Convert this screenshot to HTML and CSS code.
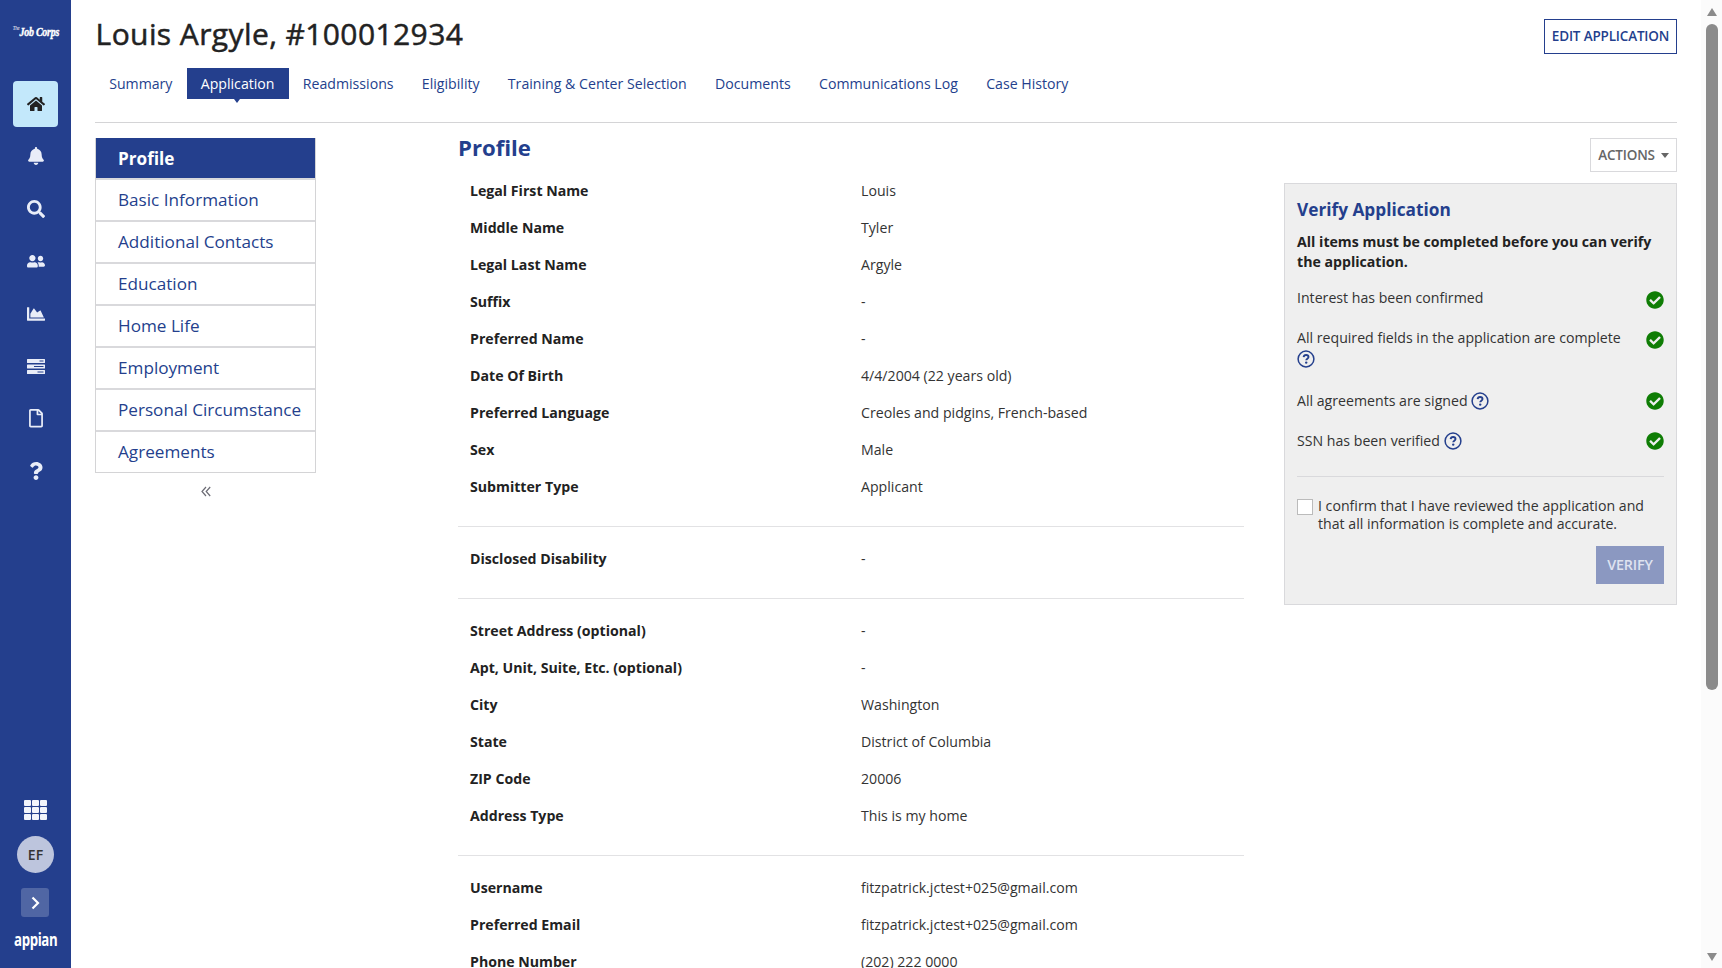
FILE: index.html
```html
<!DOCTYPE html>
<html lang="en">
<head>
<meta charset="utf-8">
<title>Louis Argyle, #100012934</title>
<link rel="stylesheet" href="styles.css">
</head>
<body>
<svg class="defs" width="0" height="0">
  <symbol id="help" viewBox="0 0 18 18"><circle cx="9" cy="9" r="7.9" fill="none" stroke="currentColor" stroke-width="1.5"/><path d="M6.6 7.1C6.8 5.7 7.8 5 9.1 5c1.400 0 2.400.8 2.400 2 0 1.700-2.300 1.700-2.300 3.300" fill="none" stroke="currentColor" stroke-width="1.900"/><circle cx="9.200" cy="12.600" r="1.200" fill="currentColor"/></symbol>
  <symbol id="check" viewBox="0 0 512 512"><path d="M504 256c0 136.967-111.033 248-248 248S8 392.967 8 256 119.033 8 256 8s248 111.033 248 248zM227.314 387.314l184-184c6.248-6.248 6.248-16.379 0-22.627l-22.627-22.627c-6.248-6.249-16.379-6.249-22.628 0L216 308.118l-70.059-70.059c-6.248-6.248-16.379-6.248-22.628 0l-22.627 22.627c-6.248 6.248-6.248 16.379 0 22.627l104 104c6.249 6.249 16.379 6.249 22.628.001z" fill="currentColor"/></symbol>
</svg>
<div class="app">
  <aside class="rail">
    <div class="logo"><span class="logo-the">The</span>Job Corps</div>
    <nav class="rail-nav">
      <a class="rail-item active"><svg width="18" height="16" viewBox="0 0 576 512"><path d="M280.37 148.26L96 300.11V464a16 16 0 0 0 16 16l112.06-.29a16 16 0 0 0 15.92-16V368a16 16 0 0 1 16-16h64a16 16 0 0 1 16 16v95.64a16 16 0 0 0 16 16.05L464 480a16 16 0 0 0 16-16V300L295.67 148.26a12.19 12.19 0 0 0-15.3 0zM571.6 251.47L488 182.56V44.05a12 12 0 0 0-12-12h-56a12 12 0 0 0-12 12v72.61L318.47 43a48 48 0 0 0-61 0L4.34 251.47a12 12 0 0 0-1.6 16.9l25.5 31A12 12 0 0 0 45.15 301l235.22-193.74a12.19 12.19 0 0 1 15.3 0L530.9 301a12 12 0 0 0 16.9-1.6l25.5-31a12 12 0 0 0-1.7-16.93z"/></svg></a>
      <a class="rail-item"><svg width="16" height="18" viewBox="0 0 448 512"><path d="M224 512c35.32 0 63.97-28.65 63.97-64H160.03c0 35.35 28.65 64 63.97 64zm215.39-149.71c-19.32-20.76-55.47-51.99-55.47-154.29 0-77.7-54.48-139.9-127.94-155.16V32c0-17.67-14.32-32-31.98-32s-31.98 14.33-31.98 32v20.84C118.56 68.1 64.08 130.3 64.08 208c0 102.3-36.15 133.53-55.47 154.29-6 6.45-8.66 14.16-8.61 21.71.11 16.4 12.98 32 32.1 32h383.8c19.12 0 32-15.6 32.1-32 .05-7.55-2.61-15.27-8.61-21.71z"/></svg></a>
      <a class="rail-item"><svg width="18" height="18" viewBox="0 0 512 512"><path d="M505 442.7L405.3 343c-4.5-4.5-10.6-7-17-7H372c27.6-35.3 44-79.7 44-128C416 93.1 322.9 0 208 0S0 93.1 0 208s93.1 208 208 208c48.3 0 92.7-16.4 128-44v16.3c0 6.4 2.5 12.5 7 17l99.7 99.7c9.4 9.4 24.6 9.4 33.9 0l28.3-28.3c9.4-9.4 9.4-24.6.1-34zM208 336c-70.7 0-128-57.2-128-128 0-70.7 57.2-128 128-128 70.7 0 128 57.2 128 128 0 70.7-57.2 128-128 128z"/></svg></a>
      <a class="rail-item"><svg width="18" height="14.500" viewBox="0 0 640 512"><path d="M192 256c61.9 0 112-50.1 112-112S253.9 32 192 32 80 82.1 80 144s50.1 112 112 112zm76.8 32h-8.3c-20.8 10-43.9 16-68.5 16s-47.6-6-68.5-16h-8.3C51.6 288 0 339.6 0 403.2V432c0 26.5 21.5 48 48 48h288c26.5 0 48-21.5 48-48v-28.8c0-63.6-51.6-115.2-115.2-115.2zM480 256c53 0 96-43 96-96s-43-96-96-96-96 43-96 96 43 96 96 96zm48 32h-3.8c-13.9 4.8-28.6 8-44.2 8s-30.3-3.2-44.2-8H432c-20.4 0-39.2 5.9-55.7 15.4 24.4 26.3 39.7 61.2 39.7 99.8v38.4c0 2.2-.5 4.3-.6 6.4H592c26.5 0 48-21.5 48-48 0-61.9-50.1-112-112-112z"/></svg></a>
      <a class="rail-item"><svg width="18" height="18" viewBox="0 0 512 512"><path d="M500 384c6.6 0 12 5.4 12 12v40c0 6.6-5.4 12-12 12H12c-6.6 0-12-5.4-12-12V76c0-6.6 5.4-12 12-12h40c6.6 0 12 5.4 12 12v308h436zM372.7 159.5L288 216l-85.3-113.7c-5.1-6.8-15.5-6.3-19.9 1L96 248v104h384l-89.9-187.8c-3.2-6.5-11.4-8.7-17.4-4.7z"/></svg></a>
      <a class="rail-item"><svg width="18" height="15" viewBox="0 0 18 15"><path fill-rule="evenodd" d="M.5 0h17q.5 0 .5.500v3q0 .5-.5.500H.5Q0 4 0 3.500v-3Q0 0 .5 0zM12.500 1.400v1.200h4V1.400zM.5 5.500h17q.5 0 .5.500v3q0 .5-.5.500H.5Q0 9.500 0 9V6q0-.5.500-.5zM7 6.900v1.200h9.500V6.900zM.5 11h17q.5 0 .5.500v3q0 .5-.5.500H.5q-.5 0-.5-.5v-3q0-.5.500-.5zM10.500 12.400v1.200h6v-1.200z"/></svg></a>
      <a class="rail-item"><svg width="14" height="18.500" viewBox="0 0 384 512"><path d="M369.9 97.9L286 14C277 5 264.8-.1 252.1-.1H48C21.5 0 0 21.5 0 48v416c0 26.5 21.5 48 48 48h288c26.5 0 48-21.5 48-48V131.9c0-12.7-5.1-25-14.1-34zM332.1 128H256V51.9l76.1 76.1zM48 464V48h160v104c0 13.3 10.7 24 24 24h104v288H48z"/></svg></a>
      <a class="rail-item"><svg width="14" height="18" viewBox="0 0 384 512"><path d="M202.021 0C122.202 0 70.503 32.703 29.914 91.026c-7.363 10.58-5.093 25.086 5.178 32.874l43.138 32.709c10.373 7.865 25.132 6.026 33.253-4.148 25.049-31.381 43.63-49.449 82.757-49.449 30.764 0 68.816 19.799 68.816 49.631 0 22.552-18.617 34.134-48.993 51.164-35.423 19.86-82.299 44.576-82.299 106.405V320c0 13.255 10.745 24 24 24h72.471c13.255 0 24-10.745 24-24v-5.773c0-42.86 125.268-44.645 125.268-160.627C377.504 66.256 286.902 0 202.021 0zM192 373.459c-38.196 0-69.271 31.075-69.271 69.271 0 38.195 31.075 69.27 69.271 69.27s69.271-31.075 69.271-69.27-31.075-69.271-69.271-69.271z"/></svg></a>
    </nav>
    <div class="rail-foot">
      <div class="waffle"><i></i><i></i><i></i><i></i><i></i><i></i><i></i><i></i><i></i></div>
      <div class="avatar">EF</div>
      <div class="expand"><svg width="9" height="14" viewBox="0 0 9 14"><path d="M1.500 1.500L7 7l-5.500 5.500" fill="none" stroke="#fff" stroke-width="2.200"/></svg></div>
      <div class="appian">appian</div>
    </div>
  </aside>
  <main class="page">
    <header class="head">
      <h1>Louis Argyle, #100012934</h1>
      <button class="btn edit">EDIT APPLICATION</button>
    </header>
    <nav class="tabs">
      <a>Summary</a><a class="on">Application</a><a>Readmissions</a><a>Eligibility</a><a>Training &amp; Center Selection</a><a>Documents</a><a>Communications Log</a><a>Case History</a>
    </nav>
    <div class="cols">
      <div class="side">
        <ul class="menu"><li class="on">Profile</li><li>Basic Information</li><li>Additional Contacts</li><li>Education</li><li>Home Life</li><li>Employment</li><li>Personal Circumstance</li><li>Agreements</li></ul>
        <div class="collapse"><svg width="10" height="11" viewBox="0 0 10 11"><path d="M5 1L1 5.500l4 4.500M9.200 1l-4 4.500 4 4.500" fill="none" stroke="#6c6c75" stroke-width="1.200"/></svg></div>
      </div>
      <section class="profile">
        <h2>Profile</h2>
        <dl><dt>Legal First Name</dt><dd>Louis</dd><dt>Middle Name</dt><dd>Tyler</dd><dt>Legal Last Name</dt><dd>Argyle</dd><dt>Suffix</dt><dd>-</dd><dt>Preferred Name</dt><dd>-</dd><dt>Date Of Birth</dt><dd>4/4/2004 (22 years old)</dd><dt>Preferred Language</dt><dd>Creoles and pidgins, French-based</dd><dt>Sex</dt><dd>Male</dd><dt>Submitter Type</dt><dd>Applicant</dd></dl>
        <dl><dt>Disclosed Disability</dt><dd>-</dd></dl>
        <dl><dt>Street Address (optional)</dt><dd>-</dd><dt>Apt, Unit, Suite, Etc. (optional)</dt><dd>-</dd><dt>City</dt><dd>Washington</dd><dt>State</dt><dd>District of Columbia</dd><dt>ZIP Code</dt><dd>20006</dd><dt>Address Type</dt><dd>This is my home</dd></dl>
        <dl><dt>Username</dt><dd>fitzpatrick.jctest+025@gmail.com</dd><dt>Preferred Email</dt><dd>fitzpatrick.jctest+025@gmail.com</dd><dt>Phone Number</dt><dd>(202) 222 0000</dd></dl>
      </section>
      <div class="right">
        <button class="btn actions">ACTIONS<span class="caret"></span></button>
        <section class="verify">
          <h3>Verify Application</h3>
          <p class="lead">All items must be completed before you can verify the application.</p>
          <ul class="checks">
            <li><span>Interest has been confirmed</span><svg class="ok"><use href="#check"/></svg></li>
            <li class="tall"><span>All required fields in the application are complete <svg class="help"><use href="#help"/></svg></span><svg class="ok"><use href="#check"/></svg></li>
            <li class="mid"><span>All agreements are signed <svg class="help"><use href="#help"/></svg></span><svg class="ok"><use href="#check"/></svg></li>
            <li class="mid"><span>SSN has been verified <svg class="help"><use href="#help"/></svg></span><svg class="ok"><use href="#check"/></svg></li>
          </ul>
          <label class="confirm"><span class="box"></span><span>I confirm that I have reviewed the application and that all information is complete and accurate.</span></label>
          <button class="btn submit">VERIFY</button>
        </section>
      </div>
    </div>
  </main>
  <div class="scroll"><span class="up"></span><span class="thumb"></span><span class="down"></span></div>
</div>
</body>
</html>
```

FILE: styles.css
```css
* { box-sizing: border-box; margin: 0; padding: 0; }
body { height: 968px; overflow: hidden; background: #fff; color: #222; font: 14.15px/20px "Open Sans", "Noto Sans", sans-serif; }
ul { list-style: none; }
.defs { position: absolute; }
.app { display: flex; height: 968px; }

.rail { width: 71px; flex: none; background: #243f8d; display: flex; flex-direction: column; align-items: center; }
.logo { height: 81px; flex: none; padding-top: 22px; display: flex; font: italic bold 12px/20px "Liberation Serif", serif; letter-spacing: -.3px; color: #fff; white-space: nowrap; transform: scaleX(.83); -webkit-text-stroke: .4px #fff; }
.logo-the { font-size: 6px; line-height: 12px; font-weight: normal; -webkit-text-stroke: 0; }
.rail-nav { display: flex; flex-direction: column; gap: 6.500px; }
.rail-item { width: 45px; height: 46px; border-radius: 4px; display: flex; align-items: center; justify-content: center; fill: #e9edf8; }
.rail-item + .rail-item { padding-bottom: 1px; }
.rail-item.active { background: #c3e8fb; fill: #222; padding-bottom: 1px; }
.rail-foot { margin-top: auto; display: flex; flex-direction: column; align-items: center; height: 168px; }
.waffle { display: grid; grid-template-columns: repeat(3, 7px); grid-auto-rows: 6px; gap: 1px; }
.waffle i { background: #f2f4fb; border-radius: 1px; }
.avatar { margin-top: 15.500px; width: 37px; height: 37px; border-radius: 50%; background: #bdc5dd; font-weight: 600; font-size: 14px; line-height: 37px; text-align: center; color: #333; }
.expand { margin-top: 15.500px; width: 28px; height: 29px; border-radius: 3px; background: #5066a4; display: flex; align-items: center; justify-content: center; }
.appian { margin-top: 13px; color: #fff; font: bold 17px/20px "Open Sans", sans-serif; letter-spacing: -.5px; transform: scaleX(.78); }

.page { flex: 1; padding: 0 24px; min-width: 0; }
.head { display: flex; justify-content: space-between; height: 68px; }
h1 { font-size: 30px; line-height: 40px; font-weight: 400; padding: 14px 0 0 .600px; letter-spacing: .4px; -webkit-text-stroke: .5px #222; }
.btn { font: 600 13.500px/20px "Open Sans", sans-serif; letter-spacing: -.17px; background: #fff; border: 1px solid; white-space: nowrap; }
.edit { margin-top: 19px; width: 133px; height: 35px; color: #243f8d; padding-bottom: 1px; }
.tabs { display: flex; height: 55px; border-bottom: 1px solid #d4d4d6; color: #243f8d; }
.tabs a { height: 31px; padding: 0 14.130px; line-height: 31px; white-space: nowrap; }
.tabs .on { background: #243f8d; color: #fff; position: relative; }
.tabs .on::after { content: ""; position: absolute; left: 50%; top: 31px; margin-left: -4px; border: 3px solid transparent; border-top: 4px solid #243f8d; border-bottom: 0; }
.cols { display: flex; padding-top: 15px; }
.side { width: 221px; flex: none; }
.menu { border: 1px solid #d4d4d6; border-top: 0; color: #243f8d; font-size: 17.150px; }
.menu li { height: 42px; line-height: 39px; padding-left: 22px; border-top: 2px solid #d9d9dc; }
.menu .on { height: 40px; border-top: 0; background: #243f8d; color: #fff; font-weight: 700; line-height: 41px; }
.collapse { display: flex; justify-content: center; padding-top: 12.500px; }

.profile { width: 786px; margin-left: 142px; flex: none; }
h2 { font-size: 22.200px; line-height: 28px; font-weight: 700; color: #243f8d; height: 33.500px; margin-top: -4px; }
h2 + dl { border-top: 0; padding-top: 5.500px; }
dl { display: grid; grid-template-columns: 391px 1fr; grid-auto-rows: 36.950px; align-items: center; padding: 13.800px 0 20.500px 12px; border-top: 1px solid #e2e2e4; }
dt { font-weight: 700; }
dd { color: #333; }
.right { width: 393px; margin-left: auto; display: flex; flex-direction: column; align-items: flex-end; }
.actions { width: 87px; height: 34px; color: #666; border-color: #d9d9dc; display: flex; align-items: center; justify-content: center; gap: 6px; }
.caret { border: 4px solid transparent; border-top: 5px solid #666; border-bottom: 0; }
.verify { width: 393px; height: 422px; margin-top: 11px; border: 1px solid #d9d9dc; background: #efefef; padding: 14px 12px; display: flex; flex-direction: column; color: #333; }
h3 { font-size: 17.250px; line-height: 23px; font-weight: 700; color: #243f8d; }
.lead { font-weight: 700; margin-top: 11px; line-height: 20px; width: 366px; color: #222; }
.checks { padding-bottom: 25px; border-bottom: 1px solid #d9d9dc; }
.checks li { display: flex; justify-content: space-between; height: 20px; margin-top: 20px; line-height: 20px; }
.checks li:first-child { margin-top: 16px; }
.checks .tall { height: 43px; }
.checks .tall span { width: 340px; }
.ok { width: 18px; height: 18px; color: #0f7d05; margin-top: 3px; }
.mid .ok { margin-top: 1px; }
.help { width: 18px; height: 18px; color: #243f8d; vertical-align: -4px; }
.tall .help { display: block; margin-top: 2px; }
.confirm { display: flex; gap: 5px; margin-top: 20px; line-height: 18px; }
.box { width: 16px; height: 16px; flex: none; background: #fff; border: 1px solid #bbb; margin-top: 2px; }
.submit { width: 68px; height: 38px; align-self: flex-end; margin-top: 13px; background: #8b98c1; color: #dfe3f0; border: 0; font-size: 14.300px; }

.scroll { width: 21px; flex: none; background: #fbfbfb; display: flex; flex-direction: column; align-items: center; padding: 8px 0 7px; }
.up, .down { border: 5px solid transparent; }
.up { border-top: 0; border-bottom: 8px solid #8b8b8b; }
.down { border-bottom: 0; border-top: 8px solid #8b8b8b; margin-top: auto; }
.thumb { width: 12px; height: 666px; margin-top: 8px; background: #8b8b8b; border-radius: 6px; }
```
